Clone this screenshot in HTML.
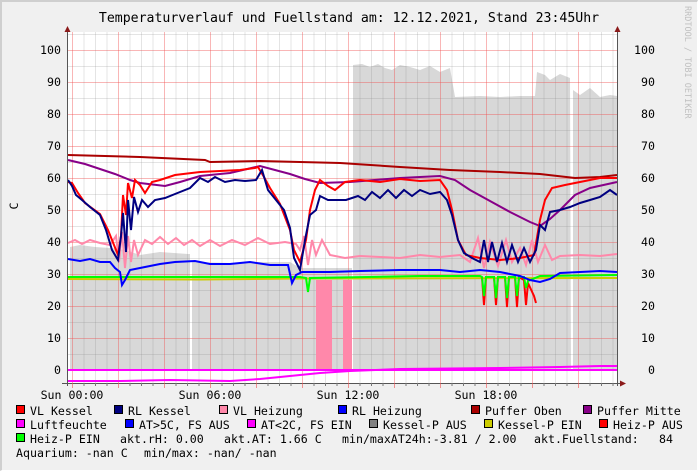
<!DOCTYPE html>
<html><head><meta charset="utf-8"><style>
html,body{margin:0;padding:0;}
body{width:698px;height:471px;overflow:hidden;background:#f0f0f0;position:relative;font-family:"DejaVu Sans Mono","Liberation Mono",monospace;}
.frame{position:absolute;left:0;top:0;border-top:2px solid #cfcfcf;border-left:2px solid #cfcfcf;border-right:1px solid #fff;border-bottom:1px solid #fff;box-sizing:border-box;width:698px;height:471px;}
svg{position:absolute;left:0;top:0;}
text{font-family:"DejaVu Sans Mono","Liberation Mono",monospace;fill:#000;}
</style></head><body>
<div class="frame"></div>
<svg width="698" height="471" viewBox="0 0 698 471">
<rect x="68" y="32" width="549" height="351" fill="#fff"/>
<polygon fill="#d8d8d8" points="70,370 70,247 80,245 95,247 110,248 125,250 140,255 160,252 188,254 190,254 190,370 192,370 192,262 230,263 260,262 290,262 300,268 352,268 352,370 353,370 353,65 362,64 370,67 378,64 385,68 392,70 400,65 410,67 420,70 430,66 440,72 450,68 455,97 480,96 500,97 520,96 535,96 537,72 545,75 550,80 560,74 570,78 571,370 573,370 573,90 580,95 590,88 600,97 610,95 617,96 617,370"/>
<g id="grid"></g>
<rect x="316" y="280" width="16" height="90" fill="#ff88aa"/>
<rect x="343" y="280" width="9" height="90" fill="#ff88aa"/>
<line x1="68" y1="370" x2="617" y2="370" stroke="#ff00ff" stroke-width="2"/>
<polyline fill="none" stroke="#ff00ff" stroke-width="2" points="68,381 120,381 170,380 230,381 260,379 290,376 320,373 350,371 400,369 450,368.5 500,368 560,367 600,366 617,366"/>
<polyline fill="none" stroke="#cccc00" stroke-width="2" points="68,279 200,279.5 300,278.5 617,278"/>
<polyline fill="none" stroke="#ff0000" stroke-width="2" points="482,277 484,305 486,277 494,277 496,305 498,277 505,277 507,307 509,277 515,277 517,307 519,277 524,280 526,305 528,283 534,296 536,303"/>
<polyline fill="none" stroke="#00ff00" stroke-width="2" points="68,277 300,277 306,278 308,292 310,278 420,276 480,276 482,277 484,296 486,277 494,277 496,298 498,277 505,277 507,298 509,277 515,277 517,296 519,277 524,277 526,288 528,281 540,276 617,275"/>
<polyline fill="none" stroke="#0000ff" stroke-width="2" points="68,259 80,261 90,259 100,262 110,262 115,268 120,272 122,285 125,280 130,270 140,268 160,264 175,262 195,261 210,264 230,264 250,262 270,265 288,265 292,283 296,275 302,272 330,272 360,271 400,270 440,270 460,272 480,270 500,272 520,276 530,280 540,282 550,279 560,273 580,272 600,271 617,272"/>
<polyline fill="none" stroke="#ff88aa" stroke-width="2" points="68,243 75,240 82,244 90,240 100,243 110,245 116,236 119,262 122,232 125,268 128,236 131,262 134,240 138,255 145,240 152,244 160,237 168,244 176,238 184,245 192,240 200,246 210,240 220,246 232,240 245,245 258,238 270,244 285,242 296,244 300,250 304,236 308,265 312,240 316,255 322,240 330,255 345,258 360,256 380,257 400,258 420,255 440,257 460,255 470,262 478,238 484,268 490,242 498,266 506,240 512,262 520,248 526,265 532,240 538,262 545,245 552,260 560,256 580,255 600,256 617,254"/>
<polyline fill="none" stroke="#aa0000" stroke-width="2" points="68,155 140,157 205,160 210,162 260,161 340,163 400,167 450,170 500,172 540,174 575,178 600,177 617,175"/>
<polyline fill="none" stroke="#880088" stroke-width="2" points="68,160 85,164 100,169 115,174 130,180 140,183 165,186 180,182 200,176 230,173 260,166 275,170 290,174 305,179 320,183 350,182 400,178 440,176 455,180 470,190 490,201 510,212 530,222 540,226 550,219 560,210 575,195 590,188 617,182"/>
<polyline fill="none" stroke="#ff0000" stroke-width="2" points="68,182 72,183 78,193 85,203 100,214 108,230 114,245 118,255 121,236 123,195 126,215 128,183 132,198 135,180 140,185 145,193 152,182 160,180 175,175 200,172 220,171 240,170 255,168 258,167 264,177 270,188 280,204 290,230 294,250 300,262 306,240 310,210 315,190 320,180 328,186 335,190 345,182 360,180 380,182 400,179 420,181 440,180 447,190 452,210 458,240 466,255 480,258 500,260 520,258 534,255 540,220 545,200 552,188 565,185 580,182 600,178 617,178"/>
<polyline fill="none" stroke="#000080" stroke-width="2" points="68,180 72,186 76,195 82,200 90,207 100,215 106,230 112,250 118,260 121,236 123,213 126,252 128,200 131,230 134,197 138,212 142,200 148,207 155,200 165,198 175,194 190,188 200,178 208,182 215,177 225,182 235,180 245,181 256,180 262,170 268,190 276,200 284,210 290,228 294,258 300,270 305,240 310,215 316,210 320,196 328,200 336,200 346,200 352,198 358,196 365,200 372,192 380,198 388,190 396,198 404,190 412,196 420,190 430,194 440,192 447,200 452,215 458,240 464,253 472,258 480,262 484,240 488,262 492,242 497,262 502,243 507,262 512,245 518,262 524,248 530,262 536,250 540,225 545,230 550,212 560,210 570,207 580,203 590,200 600,197 610,190 617,195"/>
<line x1="67.5" y1="30" x2="67.5" y2="386" stroke="#555" stroke-width="1"/>
<line x1="617.5" y1="30" x2="617.5" y2="386" stroke="#555" stroke-width="1"/>
<line x1="62" y1="383.5" x2="622" y2="383.5" stroke="#555" stroke-width="1"/>
<polygon points="64.5,32 70.5,32 67.5,26" fill="#8b1a1a"/>
<polygon points="614.5,32 620.5,32 617.5,26" fill="#8b1a1a"/>
<polygon points="620,380.5 620,386.5 626,383.5" fill="#8b1a1a"/>
<g id="ticks"></g>
<text x="349" y="22" font-size="13.2" text-anchor="middle">Temperaturverlauf und Fuellstand am: 12.12.2021, Stand 23:45Uhr</text>
<g font-size="11.6" text-anchor="end" id="ylab"></g>
<text transform="translate(18,206) rotate(-90)" font-size="11.6" text-anchor="middle">C</text>
<text transform="translate(685,6) rotate(90)" font-size="8.5" style="fill:#c0c0c0">RRDTOOL / TOBI OETIKER</text>
<g font-size="11.6" text-anchor="middle">
<text x="72" y="399">Sun 00:00</text>
<text x="210" y="399">Sun 06:00</text>
<text x="348" y="399">Sun 12:00</text>
<text x="486" y="399">Sun 18:00</text>
</g>
<g id="leg" font-size="11.6"></g>
</svg>
<script>
var ns="http://www.w3.org/2000/svg";
function el(t,a,p){var e=document.createElementNS(ns,t);for(var k in a)e.setAttribute(k,a[k]);document.getElementById(p).appendChild(e);return e;}
for(var v=0;v<=105;v+=5){var y=370-3.2*v+0.5;var maj=v%10==0;
 el("line",{x1:68,x2:617,y1:y,y2:y,stroke:maj?"rgba(240,80,80,0.42)":"rgba(130,130,130,0.22)","stroke-width":1},"grid");}
for(var i=-1;i<=48;i++){var x=72+11.5*i;if(x<68||x>617)continue;var maj=(i%4==0);
 el("line",{x1:x+0.5,x2:x+0.5,y1:32,y2:383,stroke:maj?"rgba(240,80,80,0.42)":"rgba(130,130,130,0.22)","stroke-width":1},"grid");
 el("line",{x1:x+0.5,x2:x+0.5,y1:383,y2:maj?388:386,stroke:maj?"rgba(240,80,80,0.6)":"#777","stroke-width":1},"ticks");}
for(var v=0;v<=100;v+=10){var y=370-3.2*v+4;
 var t=el("text",{x:61,y:y},"ylab");t.textContent=v;
 var t2=el("text",{x:655,y:y},"ylab");t2.textContent=v;}
var L=[[16,411,"#ff0000","VL Kessel"],[114,411,"#000080","RL Kessel"],[219,411,"#ff88aa","VL Heizung"],[338,411,"#0000ff","RL Heizung"],[471,411,"#aa0000","Puffer Oben"],[583,411,"#880088","Puffer Mitte"],
[16,425,"#ff00ff","Luftfeuchte"],[125,425,"#0000ff","AT>5C, FS AUS"],[247,425,"#ff00ff","AT<2C, FS EIN"],[369,425,"#808080","Kessel-P AUS"],[484,425,"#cccc00","Kessel-P EIN"],[599,425,"#ff0000","Heiz-P AUS"],
[16,439,"#00ff00","Heiz-P EIN"]];
L.forEach(function(l){el("rect",{x:l[0]+0.5,y:l[1]-5.5,width:8,height:8,fill:l[2],stroke:"#000","stroke-width":1},"leg");
 var t=el("text",{x:l[0]+14,y:l[1]+4},"leg");t.textContent=l[3];});
[[120,439,"akt.rH: 0.00"],[224,439,"akt.AT: 1.66 C"],[342,439,"min/maxAT24h:-3.81 / 2.00"],[534,439,"akt.Fuellstand:"],[659,439,"84"],[16,453,"Aquarium: -nan C"],[144,453,"min/max: -nan/ -nan"]].forEach(function(l){var t=el("text",{x:l[0],y:l[1]+4},"leg");t.textContent=l[2];});
</script>
</body></html>
